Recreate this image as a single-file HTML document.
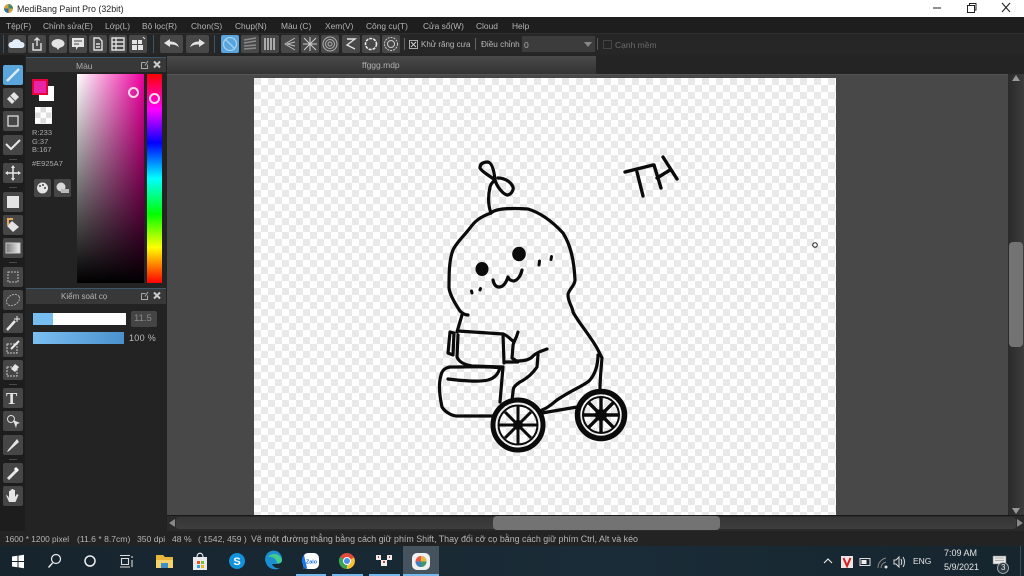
<!DOCTYPE html>
<html><head><meta charset="utf-8"><style>
html,body{margin:0;padding:0;width:1024px;height:576px;overflow:hidden;background:#222;font-family:"Liberation Sans","DejaVu Sans",sans-serif}
.a{position:absolute}
.t{position:absolute;white-space:nowrap;font-size:9px;line-height:12px;color:#bdbdbd}
.b{position:absolute;width:18px;height:18px;background:#484848;border-radius:2px;top:35px}
.b svg,.k svg{position:absolute;left:0;top:0;width:100%;height:100%}
.k{position:absolute;left:3px;width:20px;height:20px;background:#464646;border-radius:2px}
.m{top:20px;color:#b4b4b4;font-size:8.4px}
.s{top:533px;color:#b4b4b4;font-size:8.6px}
.sep{position:absolute;left:9px;width:8px;height:1px;background:#4a4a4a}
svg .w{fill:none;stroke:#e0e0e0;stroke-width:1.4}
svg .f{fill:#e4e4e4}
</style></head><body>
<div class="a" style="left:0;top:0;width:1024px;height:17px;background:#fff"></div>
<svg class="a" style="left:3px;top:3px" width="11" height="11"><circle cx="5.500" cy="5.500" r="4.500" fill="#d9a03a"/><path d="M5.500 1a4.500 4.500 0 0 1 4.500 4.500H5.500z" fill="#3a8a6a"/><path d="M1 5.500a4.500 4.500 0 0 0 4.500 4.500V5.500z" fill="#2f6f9f"/></svg>
<div class="t" style="left:17px;top:3px;color:#222;font-size:8.900px">MediBang Paint Pro (32bit)</div>
<svg class="a" style="left:925px;top:0" width="99" height="17" fill="none" stroke="#222"><path d="M8 8h8"/><path d="M42.500 5.500h7v7h-7zM44.500 5.500v-2h6.500v6.500h-1.500"/><path d="M77 3l8 9M85 3l-8 9" stroke-width="1.100"/></svg>

<div class="a" style="left:0;top:17px;width:1024px;height:16px;background:#1e1e1e"></div>
<div class="t m" style="left:6px">Tệp(F)</div><div class="t m" style="left:43px">Chỉnh sửa(E)</div><div class="t m" style="left:105px">Lớp(L)</div><div class="t m" style="left:142px">Bộ lọc(R)</div><div class="t m" style="left:191px">Chọn(S)</div><div class="t m" style="left:235px">Chụp(N)</div><div class="t m" style="left:281px">Màu (C)</div><div class="t m" style="left:325px">Xem(V)</div><div class="t m" style="left:366px">Công cụ(T)</div><div class="t m" style="left:423px">Cửa sổ(W)</div><div class="t m" style="left:476px">Cloud</div><div class="t m" style="left:512px">Help</div>

<div class="a" style="left:0;top:33px;width:1024px;height:22px;background:#262626;border-top:1px solid #2e2e2e;box-sizing:border-box"></div>
<div class="a" style="left:3px;top:35px;width:1px;height:18px;background:#38566b"></div>
<div class="a" style="left:153px;top:35px;width:1px;height:18px;background:#38566b"></div>
<div class="a" style="left:214px;top:35px;width:1px;height:18px;background:#38566b"></div>

<div class="b" style="left:8px"><svg viewBox="0 0 18 18"><path d="M3 13a3 3 0 0 1 1-6 5 5 0 0 1 9 0 3 3 0 0 1 1 6z" fill="#e4eefa"/></svg></div>
<div class="b" style="left:28px"><svg viewBox="0 0 18 18"><path class="w" d="M5 8v7h8V8M9 11V3M6.500 5.500L9 3l2.500 2.500"/></svg></div>
<div class="b" style="left:49px"><svg viewBox="0 0 18 18"><ellipse cx="9" cy="8.500" rx="6.500" ry="4.500" class="f"/><path class="f" d="M7 12l2 3 2-3z"/></svg></div>
<div class="b" style="left:69px"><svg viewBox="0 0 18 18"><path class="f" d="M3 3h12v9H9l-2 3v-3H3z"/><path d="M5 6h8M5 9h5" stroke="#444"/></svg></div>
<div class="b" style="left:89px"><svg viewBox="0 0 18 18"><path class="w" d="M5 3h5l3 3v9H5zM7 9h4M7 12h4" stroke-width="1.100"/></svg></div>
<div class="b" style="left:109px"><svg viewBox="0 0 18 18"><path class="w" d="M3 3h12v12H3zM3 7h12M3 11h12M7 3v12" stroke-width="1"/></svg></div>
<div class="b" style="left:129px"><svg viewBox="0 0 18 18"><path class="f" d="M3 5h5v4H3zM9 5h4v4H9zM3 10h5v5H3zM9 10h5v5H9z"/><path d="M14 2l2 2" stroke="#ddd"/></svg></div>
<div class="b" style="left:160px;width:23px"><svg viewBox="0 0 23 18"><path class="f" d="M4 8l6-4v2.500c5 0 8 2 9 6-2-2.500-5-3-9-3V12z"/></svg></div>
<div class="b" style="left:186px;width:23px"><svg viewBox="0 0 23 18"><path class="f" d="M19 8l-6-4v2.500c-5 0-8 2-9 6 2-2.500 5-3 9-3V12z"/></svg></div>
<div class="b" style="left:221px;background:#58a4dd"><svg viewBox="0 0 18 18"><circle cx="9" cy="9" r="6.500" fill="none" stroke="#a8d0ee" stroke-width="1.300"/><path d="M4.500 4.500l9 9" stroke="#a8d0ee" stroke-width="1.300"/></svg></div>
<div class="b" style="left:241px"><svg viewBox="0 0 18 18"><path d="M3 5l12-2M3 8l12-2M3 11l12-1M3 14l12-1" stroke="#8a8a8a" stroke-width="1.500"/></svg></div>
<div class="b" style="left:261px"><svg viewBox="0 0 18 18"><path d="M4 3v12M7 3v12M10 3v12M13 3v12" stroke="#bbb" stroke-width="1.700"/></svg></div>
<div class="b" style="left:281px"><svg viewBox="0 0 18 18"><path d="M14 3L4 9l10 6M14 7L6 9l8 2" stroke="#bbb" fill="none"/></svg></div>
<div class="b" style="left:301px"><svg viewBox="0 0 18 18"><path d="M3 3l12 12M15 3L3 15M9 2v14M2 9h14" stroke="#ccc"/></svg></div>
<div class="b" style="left:321px"><svg viewBox="0 0 18 18"><g fill="none" stroke="#b0b0b0"><circle cx="9" cy="9" r="7"/><circle cx="9" cy="9" r="4.500"/><circle cx="9" cy="9" r="2"/></g></svg></div>
<div class="b" style="left:342px"><svg viewBox="0 0 18 18"><path class="w" d="M5 4h8L5 10l8 4"/></svg></div>
<div class="b" style="left:362px"><svg viewBox="0 0 18 18"><circle cx="9" cy="9" r="5.500" fill="none" stroke="#e8e8e8" stroke-width="1.600" stroke-dasharray="3 1"/></svg></div>
<div class="b" style="left:382px"><svg viewBox="0 0 18 18"><g fill="none" stroke="#ccc"><circle cx="9" cy="9" r="6.500" stroke-dasharray="2 1"/><circle cx="9" cy="9" r="3.500"/></g></svg></div>
<div class="a" style="left:404px;top:38px;width:1px;height:12px;background:#666"></div>
<div class="a" style="left:409px;top:40px;width:7px;height:7px;border:1px solid #aaa"></div>
<svg class="a" style="left:410px;top:41px" width="7" height="7"><path d="M1 1l5 5M6 1L1 6" stroke="#ccc"/></svg>
<div class="t" style="left:421px;top:39px;color:#b8b8b8;font-size:8px">Khử răng cưa</div>
<div class="a" style="left:475px;top:38px;width:1px;height:12px;background:#666"></div>
<div class="t" style="left:481px;top:39px;color:#b8b8b8;font-size:8.200px">Điều chỉnh</div>
<div class="a" style="left:522px;top:36px;width:73px;height:16px;background:#3c3c3c"></div>
<div class="t" style="left:524px;top:39px;color:#aaa;font-size:8.500px">0</div>
<svg class="a" style="left:584px;top:42px" width="8" height="5"><path d="M0 0h8L4 5z" fill="#888"/></svg>
<div class="a" style="left:597px;top:38px;width:1px;height:12px;background:#555"></div>
<div class="a" style="left:603px;top:40px;width:7px;height:7px;border:1px solid #444"></div>
<div class="t" style="left:615px;top:39px;color:#6a6a6a;font-size:8.500px">Cạnh mềm</div>

<div class="a" style="left:0;top:55px;width:1024px;height:19px;background:#242424"></div>
<div class="a" style="left:167px;top:56px;width:429px;height:18px;background:linear-gradient(#4a4a4a,#333)"></div>
<div class="t" style="left:362px;top:59px;color:#b0b0b0;font-size:8.500px">ffggg.mdp</div>

<div class="a" style="left:0;top:55px;width:25px;height:476px;background:#1d1d1d"></div>
<div class="a" style="left:25px;top:57px;width:141px;height:474px;background:#232323"></div>
<div class="a" style="left:26px;top:57px;width:140px;height:1px;background:#3b5a70"></div>
<div class="a" style="left:26px;top:58px;width:140px;height:14px;background:#383838"></div>
<div class="t" style="left:76px;top:60px;color:#aaa;font-size:8.500px">Màu</div>
<div class="a" style="left:26px;top:288px;width:140px;height:1px;background:#3b5a70"></div>
<div class="a" style="left:26px;top:289px;width:140px;height:15px;background:#383838"></div>
<div class="t" style="left:61px;top:291px;color:#b4b4b4;font-size:8px">Kiểm soát cọ</div>
<svg class="a" style="left:140px;top:60px" width="22" height="10"><path d="M1.500 2.500h4M1.500 2.500v6h6v-4M5 5.500L8 1" stroke="#aaa" fill="none"/><path d="M14 1.500l6 6M20 1.500l-6 6" stroke="#ccc" stroke-width="2"/></svg>
<svg class="a" style="left:140px;top:291px" width="22" height="10"><path d="M1.500 2.500h4M1.500 2.500v6h6v-4M5 5.500L8 1" stroke="#aaa" fill="none"/><path d="M14 1.500l6 6M20 1.500l-6 6" stroke="#ccc" stroke-width="2"/></svg>

<div class="a" style="left:39px;top:86px;width:15px;height:15px;background:#fff"></div>
<div class="a" style="left:32px;top:79px;width:12px;height:12px;background:#e925a7;border:2px solid #e8003a"></div>
<div class="a" style="left:35px;top:107px;width:17px;height:17px;background:conic-gradient(#ddd 25%,#fff 0 50%,#ddd 0 75%,#fff 0) 0 0/11px 11px"></div>
<div class="t" style="left:32px;top:129px;font-size:7.500px;line-height:8.500px;color:#aaa">R:233<br>G:37<br>B:167</div>
<div class="t" style="left:32px;top:158px;font-size:7.500px;color:#aaa">#E925A7</div>
<div class="a" style="left:34px;top:179px;width:17px;height:18px;background:#464646;border-radius:2px"></div>
<div class="a" style="left:54px;top:179px;width:17px;height:18px;background:#464646;border-radius:2px"></div>
<svg class="a" style="left:34px;top:179px" width="37" height="18"><circle cx="8.500" cy="9" r="5.500" fill="#e4e4e4"/><g fill="#444"><circle cx="6" cy="7" r="1"/><circle cx="9" cy="6" r="1"/><circle cx="11" cy="9" r="1"/></g><circle cx="27" cy="8" r="4.500" fill="#d8d8d8"/><rect x="27" y="10" width="8" height="4" fill="#bbb"/></svg>
<div class="a" style="left:77px;top:74px;width:67px;height:209px;background:linear-gradient(to bottom,rgba(0,0,0,0),#000),linear-gradient(to right,#fff,#f0009f)"></div>
<div class="a" style="left:147px;top:74px;width:15px;height:209px;background:linear-gradient(#f00 0%,#f0f 17%,#00f 33%,#0ff 50%,#0f0 67%,#ff0 83%,#f00 100%)"></div>
<div class="a" style="left:128px;top:87px;width:7px;height:7px;border:2px solid #f4d8ea;border-radius:50%"></div>
<div class="a" style="left:149px;top:93px;width:7px;height:7px;border:2px solid #f8dcf0;border-radius:50%"></div>

<div class="a" style="left:33px;top:313px;width:93px;height:12px;background:#fff"></div>
<div class="a" style="left:33px;top:313px;width:20px;height:12px;background:#78bdf0"></div>
<div class="a" style="left:131px;top:311px;width:26px;height:16px;background:#444;border-radius:2px"></div>
<div class="t" style="left:134px;top:313px;color:#8a8a8a;font-size:9.500px">11.5</div>
<div class="a" style="left:33px;top:332px;width:91px;height:12px;background:linear-gradient(100deg,#7cc0f2,#4a90cc)"></div>
<div class="t" style="left:129px;top:332px;font-size:9px;color:#bbb;letter-spacing:.3px">100 %</div>

<div class="sep" style="top:159px"></div><div class="sep" style="top:187px"></div><div class="sep" style="top:262px"></div><div class="sep" style="top:384px"></div><div class="sep" style="top:459px"></div>
<div class="k" style="top:65px;background:#5aa5dc"><svg viewBox="0 0 20 20"><path d="M4 16L16 4" stroke="#dcecf8" stroke-width="2.500"/></svg></div>
<div class="k" style="top:88px"><svg viewBox="0 0 20 20"><path class="f" d="M4 11l7-7 5 5-7 7z"/><path d="M7 8l5 5" stroke="#555"/></svg></div>
<div class="k" style="top:111px"><svg viewBox="0 0 20 20"><rect x="5" y="5" width="10" height="10" fill="none" stroke="#ddd" stroke-width="1.300"/></svg></div>
<div class="k" style="top:135px"><svg viewBox="0 0 20 20"><path d="M3 9l5 5 9-9" fill="none" stroke="#e8e8e8" stroke-width="2"/></svg></div>
<div class="k" style="top:163px"><svg viewBox="0 0 20 20"><path d="M10 3v14M3 10h14" stroke="#e8e8e8" stroke-width="1.500"/><path class="f" d="M10 2l2 3H8zM10 18l2-3H8zM2 10l3 2V8zM18 10l-3 2V8z"/></svg></div>
<div class="k" style="top:192px"><svg viewBox="0 0 20 20"><rect x="4" y="4" width="12" height="12" fill="#e4e4e4"/></svg></div>
<div class="k" style="top:215px"><svg viewBox="0 0 20 20"><path class="f" d="M9 6l7 6-6 5-6-6z"/><path d="M4 4h6M5 4v6" stroke="#e8a860" stroke-width="2"/></svg></div>
<div class="k" style="top:238px"><svg viewBox="0 0 20 20"><defs><linearGradient id="g"><stop offset="0" stop-color="#777"/><stop offset="1" stop-color="#eee"/></linearGradient></defs><rect x="3" y="5" width="14" height="10" fill="url(#g)" stroke="#ccc"/></svg></div>
<div class="k" style="top:267px"><svg viewBox="0 0 20 20"><rect x="5" y="5" width="10" height="10" fill="none" stroke="#bbb" stroke-dasharray="2 1"/></svg></div>
<div class="k" style="top:290px"><svg viewBox="0 0 20 20"><ellipse cx="10" cy="10" rx="7" ry="5" transform="rotate(-30 10 10)" fill="none" stroke="#aaa" stroke-dasharray="2 1"/></svg></div>
<div class="k" style="top:313px"><svg viewBox="0 0 20 20"><path d="M4 17L12 8" stroke="#e8e8e8" stroke-width="2.500"/><path d="M14 3v6M11 6h6" stroke="#e8e8e8"/></svg></div>
<div class="k" style="top:337px"><svg viewBox="0 0 20 20"><rect x="4" y="7" width="10" height="9" fill="none" stroke="#ccc" stroke-dasharray="2 1"/><path d="M8 12l8-8" stroke="#e8e8e8" stroke-width="2"/></svg></div>
<div class="k" style="top:360px"><svg viewBox="0 0 20 20"><rect x="4" y="7" width="10" height="9" fill="none" stroke="#ccc" stroke-dasharray="2 1"/><path class="f" d="M8 9l4-5 4 3-4 5z"/></svg></div>
<div class="k" style="top:388px"><div class="t" style="left:3px;top:4px;font:bold 17px/13px 'Liberation Serif',serif;color:#e4e4e4">T</div></div>
<div class="k" style="top:411px"><svg viewBox="0 0 20 20"><circle cx="8" cy="8" r="3.500" fill="none" stroke="#ddd"/><path class="f" d="M10 9l7 3-3 1 -1 4z"/></svg></div>
<div class="k" style="top:435px"><svg viewBox="0 0 20 20"><path class="f" d="M5 15l-1 2 2-1L16 7l-2-3z"/></svg></div>
<div class="k" style="top:463px"><svg viewBox="0 0 20 20"><path d="M5 16l9-9" stroke="#e8e8e8" stroke-width="3"/><path d="M12 5l3 3" stroke="#fff" stroke-width="3"/></svg></div>
<div class="k" style="top:486px"><svg viewBox="0 0 20 20"><path class="f" d="M6 16L3 9l2 1 1 2V5h1.500v5V3.500H9V10V3h1.500v7V4H12v7l2-3 1.500 1-3 7z"/></svg></div>

<div class="a" style="left:167px;top:74px;width:841px;height:441px;background:#484848;border-top:1px solid #555;box-sizing:border-box"></div>
<svg class="a" style="left:254px;top:78px" width="582" height="437" viewBox="254 78 582 437">
<defs><pattern id="c" x="254" y="78" width="14" height="14" patternUnits="userSpaceOnUse"><rect x="0" y="0" width="14" height="14" fill="#fff"/><rect x="0" y="0" width="7" height="7" fill="#e9e9e9"/><rect x="7" y="7" width="7" height="7" fill="#e9e9e9"/></pattern></defs>
<rect x="254" y="78" width="582" height="437" fill="url(#c)"/>
<g fill="none" stroke="#0b0b0b" stroke-width="3.200" stroke-linecap="round" stroke-linejoin="round">
<path d="M491 213C496 208 514 208 528 209C538 212 550 219 563 233C570 244 574 258 575 280C575 286 568 290 568 295C568 302 573 308 573 312C578 322 592 338 598 350L602 358C601 370 600 380 600 388"/>
<path d="M491 213C480 217 475 221 470 228C463 237 456 243 453 250C449 260 449 275 449 288C450 296 458 308 460 311C463 314 466 315 468 315"/>
<path d="M598 355C598 365 595 375 589 381C583 386 570 391 557 400C552 404 548 408 542 410"/>
<path d="M542 413L577 407"/>
<path d="M462 315L457 332"/>
<path d="M450 332L448 353L453 355L454 333Z"/>
<path d="M458 331C475 332 490 333 503 334C507 335 510 339 513 341"/>
<path d="M503 334L504 363"/>
<path d="M458 335L457 357C459 362 465 365 472 366L502 367"/>
<path d="M518 332C516 340 513 342 513 346L512 358L518 362L505 362"/>
<path d="M517 361C524 361 530 360 533 356C537 352 542 351 547 349"/>
<path d="M538 355L537 367C533 373 528 378 520 382C514 386 513 388 513 392L512 400"/>
<path d="M448 379C462 381 480 382 488 380C495 378 498 374 500 368C490 366 470 367 450 367C444 368 442 371 441 375C438 385 440 398 442 407C445 412 452 416 457 416L493 416"/>
<path d="M503 367L500 402"/>
<path d="M491 213C488 205 488 196 490 187C491 183 494 181 495 180C490 176 482 172 480 168C480 163 484 162 488 162C492 163 494 170 495 180C497 187 503 194 507 195C511 195 514 190 513 187C511 182 505 178 498 178"/>
<path d="M493 280C494 285 496 287 499 287C503 287 506 283 508 277C509 280 512 281 514 281C518 280 521 275 522 270"/>
<path d="M625 172L653 165M637 172L643 196M654 165L661 188M657 178L670 170M663 157L677 179" stroke-width="3.400"/>
</g>
<ellipse cx="482" cy="269" rx="6.500" ry="7" fill="#0b0b0b"/>
<ellipse cx="519" cy="254" rx="6.800" ry="7.200" fill="#0b0b0b"/>
<g stroke="#0b0b0b" stroke-width="3" stroke-linecap="round"><path d="M472 293L471.500 291M480 290L480.500 288.500M539 265L539.500 261M551 259.500L551.500 256.500"/></g>
<g fill="none" stroke="#0b0b0b">
<circle cx="518" cy="425" r="25" stroke-width="5"/><circle cx="518" cy="425" r="19.500" stroke-width="2"/>
<path d="M518 406V444M499 425H537M505 412L531 438M531 412L505 438" stroke-width="3"/>
<circle cx="518" cy="425" r="4.500" fill="#0b0b0b"/>
<circle cx="601" cy="415" r="23.500" stroke-width="5.500"/><circle cx="601" cy="415" r="18" stroke-width="2"/>
<path d="M601 397V433M583 415H619M588 402L614 428M614 402L588 428" stroke-width="3.400"/>
<circle cx="601" cy="415" r="5.500" fill="#0b0b0b"/>
</g>
<circle cx="815" cy="245" r="2.300" fill="none" stroke="#222" stroke-width="1"/>
</svg>

<div class="a" style="left:167px;top:515px;width:857px;height:16px;background:#2a2a2a;border-top:1px solid #191919;box-sizing:border-box"></div>
<div class="a" style="left:176px;top:517px;width:840px;height:12px;background:linear-gradient(#363636,#3e3e3e);border-radius:3px"></div>
<div class="a" style="left:493px;top:516px;width:227px;height:14px;background:#737373;border-radius:4px"></div>
<svg class="a" style="left:168px;top:519px" width="8" height="8"><path d="M7 0v8L1 4z" fill="#888"/></svg>
<svg class="a" style="left:1016px;top:519px" width="8" height="8"><path d="M1 0v8l6-4z" fill="#888"/></svg>
<div class="a" style="left:1008px;top:74px;width:16px;height:441px;background:linear-gradient(90deg,#2a2a2a,#3c3c3c)"></div>
<div class="a" style="left:1009px;top:242px;width:14px;height:105px;background:#737373;border-radius:4px"></div>
<svg class="a" style="left:1012px;top:74px" width="8" height="8"><path d="M0 7h8L4 1z" fill="#999"/></svg>
<svg class="a" style="left:1012px;top:507px" width="8" height="8"><path d="M0 1h8L4 7z" fill="#999"/></svg>

<div class="a" style="left:0;top:531px;width:1024px;height:15px;background:#232323"></div>
<div class="t s" style="left:5px;font-size:8.300px">1600 * 1200 pixel</div>
<div class="t s" style="left:77px">(11.6 * 8.7cm)</div>
<div class="t s" style="left:137px">350 dpi</div>
<div class="t s" style="left:172px">48 %</div>
<div class="t s" style="left:198px">( 1542, 459 )</div>
<div class="t s" style="left:251px;font-size:8.900px">Vẽ một đường thẳng bằng cách giữ phím Shift, Thay đổi cỡ cọ bằng cách giữ phím Ctrl, Alt và kéo</div>

<div class="a" style="left:0;top:546px;width:1024px;height:30px;background:linear-gradient(90deg,#16242d,#1a2c38 60%,#16252e)"></div>
<div class="a" style="left:403px;top:546px;width:36px;height:30px;background:#44535d"></div>
<div class="a" style="left:296px;top:574px;width:30px;height:2px;background:#76b9ed"></div>
<div class="a" style="left:332px;top:574px;width:31px;height:2px;background:#76b9ed"></div>
<div class="a" style="left:369px;top:574px;width:31px;height:2px;background:#76b9ed"></div>
<div class="a" style="left:403px;top:574px;width:36px;height:2px;background:#76b9ed"></div>
<svg class="a" style="left:0;top:546px" width="440" height="30">
<path d="M12 10.500l5.500-.8V15H12zM18.500 9.600L24 8.800V15h-5.500zM12 16h5.500v5.300L12 20.500zM18.500 16H24v6.200l-5.500-.8z" fill="#fff"/>
<circle cx="56" cy="13" r="4.500" fill="none" stroke="#eee" stroke-width="1.200"/><path d="M52.500 17L48.500 21.500" stroke="#eee" stroke-width="1.400"/>
<circle cx="90" cy="15" r="5" fill="none" stroke="#eee" stroke-width="1.500"/>
<path d="M120 9.500h10M120 21h10M121.500 12.500h7v6h-7zM132 10v2M132 14v7" fill="none" stroke="#ddd" stroke-width="1.100"/>
<path d="M156 9h7l2 2h8v11h-17z" fill="#e8b63c"/><path d="M156 14h17v8h-17z" fill="#f4d36c"/><rect x="161" y="17" width="7" height="5" fill="#3d8fc9"/>
<path d="M193 11h14v13h-14z" fill="#e8eaec"/><path d="M197 11c0-5 6-5 6 0" fill="none" stroke="#e8eaec" stroke-width="1.200"/><rect x="197" y="15" width="3" height="3" fill="#e8512c"/><rect x="201" y="15" width="3" height="3" fill="#7dbb2f"/><rect x="197" y="19" width="3" height="3" fill="#2aa3e8"/><rect x="201" y="19" width="3" height="3" fill="#f3b41b"/>
<circle cx="237" cy="15" r="8" fill="#1392dc"/><text x="237" y="19" text-anchor="middle" font-size="11" font-weight="bold" fill="#fff" font-family="Liberation Sans">S</text>
<path d="M266 17a8.500 8.500 0 1 1 16 -3c0 3-3 4-6 4h-4c1 3 5 5 8 4-4 3-12 1-14-5z" fill="#1b8fd0"/><path d="M268 11a8 8 0 0 1 14 3c0 3-3 4-5 3 0-4-5-7-9-6z" fill="#43cc8c"/>
<rect x="303" y="7" width="16" height="16" rx="5" fill="#fff"/><path d="M304 9a8 8 0 0 0 0 11l-1 3 4-1z" fill="#1a73e8"/><text x="311.500" y="17.500" text-anchor="middle" font-size="5.500" font-weight="bold" fill="#1a73e8" font-family="Liberation Sans">Zalo</text>
<circle cx="347" cy="15" r="8" fill="#e04a3a"/><path d="M347 15l7-3.500a8 8 0 0 1-7 11.500z" fill="#f4c430"/><path d="M347 15v8a8 8 0 0 1-7-12z" fill="#3aa655"/><circle cx="347" cy="15" r="3.500" fill="#4a8fe8" stroke="#fff"/>
<path d="M376 9h5v5h-5zM387 9h5v5h-5zM381 14h6v6h-6z" fill="#eee"/><path d="M378 11h1M389 11h1M383 16h2" stroke="#c33" stroke-width="2"/>
<rect x="412" y="7" width="18" height="17" rx="5" fill="#f0f0f0"/><circle cx="421" cy="15.500" r="5.500" fill="#e8584a"/><path d="M421 15.500l5.500 0a5.500 5.500 0 0 1-5.500 5.500z" fill="#3a9a6a"/><path d="M421 15.500v5.500a5.500 5.500 0 0 1-5.500-5.500z" fill="#3b7fc4"/><path d="M421 15.500h5.500a5.500 5.500 0 0 0-5.500-5.500z" fill="#e8b83a"/>
</svg>
<svg class="a" style="left:820px;top:546px" width="204" height="30">
<path d="M4 17l4-4 4 4" fill="none" stroke="#eee" stroke-width="1.100"/>
<rect x="21" y="10" width="12" height="12" fill="#f0e4e4"/><path d="M23.500 12l3.500 8 3.500-8" fill="none" stroke="#d02020" stroke-width="2"/>
<rect x="40" y="12.500" width="10" height="7" fill="none" stroke="#ddd"/><rect x="41.500" y="14" width="5" height="4" fill="#eee"/>
<path d="M58 22a10 10 0 0 1 8-10M61 22a6 6 0 0 1 5-6" fill="none" stroke="#888"/><circle cx="66" cy="21" r="1.500" fill="#ddd"/>
<path d="M74 14h2l3-3v10l-3-3h-2zM81 13c1 2 1 4 0 6M83 11c2 3 2 7 0 10" fill="none" stroke="#ddd"/>
<path d="M173 10h13v8h-13zM175 12h9M175 14.500h9" fill="#e8e8e8" stroke="#777" stroke-width=".5"/>
<circle cx="183" cy="22" r="5.500" fill="#2c3a44" stroke="#bbb" stroke-width=".8"/>
</svg>
<div class="t" style="left:913px;top:555px;color:#e4e4e4;font-size:8.500px">ENG</div>
<div class="t" style="left:944px;top:547px;color:#e4e4e4;font-size:9px">7:09 AM</div>
<div class="t" style="left:944px;top:561px;color:#e4e4e4;font-size:9px">5/9/2021</div>
<div class="t" style="left:1001px;top:562px;color:#eee;font-size:8px">3</div>
<div class="a" style="left:1020px;top:546px;width:1px;height:30px;background:#3c4a54"></div>
</body></html>
